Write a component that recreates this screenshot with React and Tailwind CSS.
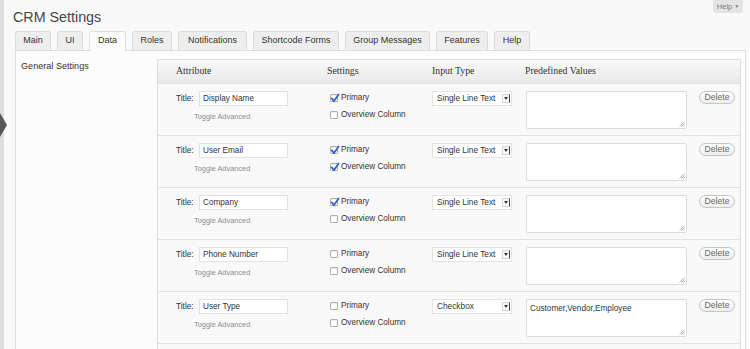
import React from "react";

const tabs = [
  { label: "Main", w: "w-[36px]" },
  { label: "UI", w: "w-[26px]" },
  { label: "Data", w: "w-[37px]", active: true },
  { label: "Roles", w: "w-[40px]" },
  { label: "Notifications", w: "w-[69px]" },
  { label: "Shortcode Forms", w: "w-[86px]" },
  { label: "Group Messages", w: "w-[85px]" },
  { label: "Features", w: "w-[52px]" },
  { label: "Help", w: "w-[36px]" },
];

const fields = [
  { title: "Display Name", primary: true, overview: false, type: "Single Line Text", values: "" },
  { title: "User Email", primary: true, overview: true, type: "Single Line Text", values: "" },
  { title: "Company", primary: true, overview: false, type: "Single Line Text", values: "" },
  { title: "Phone Number", primary: false, overview: false, type: "Single Line Text", values: "" },
  { title: "User Type", primary: false, overview: false, type: "Checkbox", values: "Customer,Vendor,Employee" },
];

function Check({ checked }) {
  return (
    <span className="relative inline-block h-[8px] w-[8px] shrink-0 rounded-[1px] border border-[#b0b0b0] bg-white shadow-[inset_0_1px_1px_rgba(0,0,0,.08)]">
      {checked && (
        <svg className="absolute -left-px -top-[2px]" width="10" height="10" viewBox="0 0 10 10">
          <path d="M1.8 5.4 L4 8 L8.6 1.4" stroke="#2f64c9" strokeWidth="1.8" fill="none" strokeLinecap="round" />
        </svg>
      )}
    </span>
  );
}

function FakeSelect({ value }) {
  return (
    <div className="flex h-[15px] w-[80px] items-center justify-between border border-[#e4e4e4] bg-white pl-[4px] pr-px text-[8.3px] text-[#333]">
      <span>{value}</span>
      <span className="flex h-[9px] w-[8px] items-center justify-center border border-[#d4d4d4] border-r-[#444] bg-[#fafafa]">
        <span className="h-0 w-0 border-x-[2px] border-t-[3px] border-x-transparent border-t-[#333]" />
      </span>
    </div>
  );
}

function FieldRow({ field }) {
  return (
    <div className="grid h-[52px] grid-cols-[169px_105px_94px_173px_41px] items-start border-b border-[#e1e1e1] bg-[#f9f9f9]">
      <div className="pl-[18px] pt-[7px]">
        <div className="flex items-center">
          <span className="w-[23px] text-[8.3px] text-[#333]">Title:</span>
          <input
            readOnly
            value={field.title}
            className="h-[15px] w-[89px] border border-[#e2e2e2] bg-white px-[3px] text-[8.2px] text-[#333] outline-none"
          />
        </div>
        <div className="mt-[6px] pl-[18px] text-[7.4px] leading-[10px] text-[#8c8c8c]">Toggle Advanced</div>
      </div>

      <div className="flex flex-col gap-[7px] pl-[3px] pt-[9px] text-[8.2px] leading-[10px] text-[#333]">
        <label className="flex items-center gap-[3px]">
          <Check checked={field.primary} />
          <span>Primary</span>
        </label>
        <label className="flex items-center gap-[3px]">
          <Check checked={field.overview} />
          <span>Overview Column</span>
        </label>
      </div>

      <div className="pt-[7px]">
        <FakeSelect value={field.type} />
      </div>

      <div className="pt-[7px]">
        <div className="relative h-[38px] w-[161px]">
          <textarea
            readOnly
            defaultValue={field.values}
            className="block h-full w-full resize-none rounded-[2px] border border-[#dcdcdc] bg-white px-[3px] py-[3px] text-[8.2px] leading-[11px] text-[#333] outline-none"
          />
          <svg className="absolute bottom-[2px] right-[2px]" width="6" height="6" viewBox="0 0 6 6">
            <path d="M0.5 5.5 L5.5 0.5 M2.5 5.5 L5.5 2.5 M4.3 5.5 L5.5 4.3" stroke="#9a9a9a" strokeWidth="0.8" />
          </svg>
        </div>
      </div>

      <div className="pt-[7px]">
        <button className="flex h-[13px] w-[36px] items-center justify-center rounded-full border border-[#c4c4c4] bg-[linear-gradient(180deg,#ffffff,#eeeeee)] text-[8.6px] text-[#666]">
          Delete
        </button>
      </div>
    </div>
  );
}

export default function App() {
  return (
    <div className="relative flex h-[349px] w-[750px] overflow-hidden bg-[#f9f9f9] font-['Liberation_Sans',Arial,sans-serif]">
      <div className="relative w-[4px] shrink-0 bg-[#dedede]">
        <span className="absolute left-0 top-[113px] h-0 w-0 border-y-[12px] border-l-[7px] border-y-transparent border-l-[#575757]" />
      </div>

      <div className="flex min-w-0 flex-1 flex-col pl-[9px] pr-[4px]">
        <div className="flex items-start justify-between">
          <h1 className="pt-[8px] text-[14.3px] leading-[18px] text-[#464646]">CRM Settings</h1>
          <span className="mr-[3px] flex h-[13px] w-[30px] items-center justify-center gap-[2px] rounded-b-[3px] bg-[#e4e4e4] text-[7.5px] text-[#7a7a7a]">
            Help <span className="text-[5px]">▼</span>
          </span>
        </div>

        <div className="ml-[2px] mt-[5px] flex items-end gap-[6px]">
          {tabs.map((t) => (
            <div
              key={t.label}
              className={
                t.active
                  ? `relative z-10 -mb-px flex h-[20px] items-center justify-center rounded-t-[3px] border border-b-0 border-[#dfdfdf] bg-[#fcfcfc] pb-px text-[9px] text-[#333] ${t.w}`
                  : `flex h-[19px] items-center justify-center rounded-t-[3px] border border-b-0 border-[#dcdcdc] bg-[#eeeeee] text-[9px] text-[#333] ${t.w}`
              }
            >
              {t.label}
            </div>
          ))}
        </div>

        <div className="ml-[2px] flex flex-1 border border-[#dfdfdf] bg-[#fcfcfc] pr-[4px] pt-[8px]">
          <div className="w-[141px] shrink-0 pl-[5px] pt-px text-[9.1px] leading-[12px] text-[#333]">General Settings</div>

          <div className="w-[584px] shrink-0 self-start border border-[#dfdfdf] bg-[#f9f9f9]">
            <div className="grid h-[24px] grid-cols-[169px_105px_94px_173px_41px] items-center border-b border-[#dfdfdf] bg-[linear-gradient(180deg,#f9f9f9,#e9e9e9)] font-['Liberation_Serif','Times_New_Roman',serif] text-[9.8px] text-[#333]">
              <span className="pl-[18px]">Attribute</span>
              <span>Settings</span>
              <span>Input Type</span>
              <span className="-ml-px">Predefined Values</span>
              <span />
            </div>
            {fields.map((f) => (
              <FieldRow key={f.title} field={f} />
            ))}
            <div className="h-[20px] bg-[#f9f9f9]" />
          </div>
        </div>
      </div>
    </div>
  );
}
